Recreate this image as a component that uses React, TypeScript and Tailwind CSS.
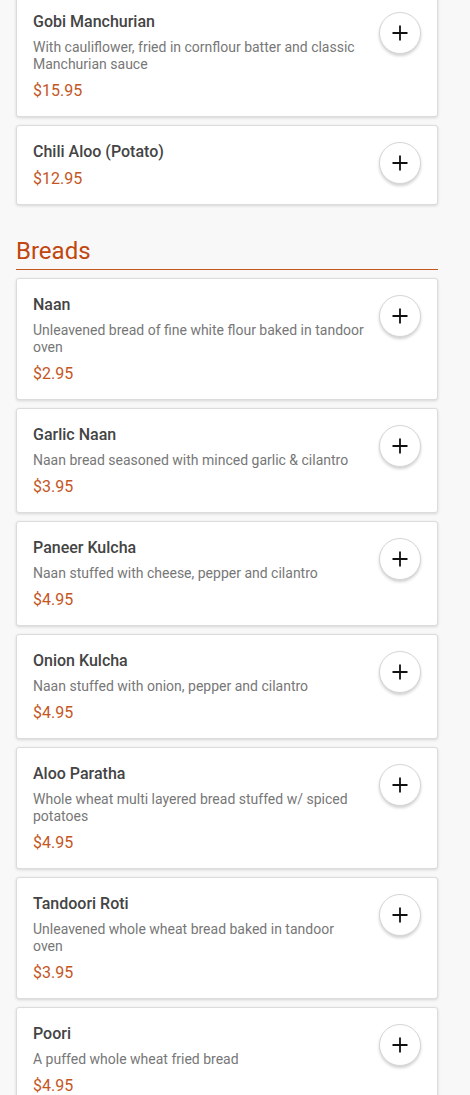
import React, { FC } from "react";

type MenuItem = {
  name: string;
  description?: string;
  price: string;
};

const topItems: MenuItem[] = [
  {
    name: "Gobi Manchurian",
    description: "With cauliflower, fried in cornflour batter and classic Manchurian sauce",
    price: "$15.95",
  },
  { name: "Chili Aloo (Potato)", price: "$12.95" },
];

const breads: MenuItem[] = [
  { name: "Naan", description: "Unleavened bread of fine white flour baked in tandoor oven", price: "$2.95" },
  { name: "Garlic Naan", description: "Naan bread seasoned with minced garlic & cilantro", price: "$3.95" },
  { name: "Paneer Kulcha", description: "Naan stuffed with cheese, pepper and cilantro", price: "$4.95" },
  { name: "Onion Kulcha", description: "Naan stuffed with onion, pepper and cilantro", price: "$4.95" },
  { name: "Aloo Paratha", description: "Whole wheat multi layered bread stuffed w/ spiced potatoes", price: "$4.95" },
  { name: "Tandoori Roti", description: "Unleavened whole wheat bread baked in tandoor oven", price: "$3.95" },
  { name: "Poori", description: "A puffed whole wheat fried bread", price: "$4.95" },
];

const AddButton: FC = () => (
  <button
    type="button"
    className="flex h-[42px] w-[42px] shrink-0 items-center justify-center rounded-full border border-[#d6d6d6] bg-white shadow-[0_2px_3px_rgba(0,0,0,0.18)]"
  >
    <svg width="18" height="18" viewBox="0 0 18 18">
      <path d="M9 1.5v15M1.5 9h15" stroke="#111" strokeWidth="1.8" />
    </svg>
  </button>
);

const MenuCard: FC<{ item: MenuItem }> = ({ item }) => (
  <div className="flex justify-between gap-2 rounded-[3px] border border-[#dcdcdc] bg-white p-4 shadow-[0_1px_3px_rgba(0,0,0,0.14)]">
    <div className="flex flex-col gap-2">
      <div className="text-[16px] leading-[19px] font-medium text-[#444]">{item.name}</div>
      {item.description && (
        <div className="max-w-[332px] text-[14px] leading-[17px] text-[#777]">{item.description}</div>
      )}
      <div className="text-[16px] leading-[19px] text-[#c4561f]">{item.price}</div>
    </div>
    <AddButton />
  </div>
);

export default function App() {
  return (
    <div className="min-h-screen overflow-hidden bg-[#f8f8f8] font-['Roboto','Liberation_Sans',sans-serif]">
      <div className="-mt-[5px] flex w-[454px] flex-col gap-2 px-4">
        {topItems.map((item) => (
          <MenuCard key={item.name} item={item} />
        ))}
        <div className="mt-[24px] flex flex-col gap-[4px]">
          <h2 className="text-[24px] leading-[28px] text-[#c1470f]">Breads</h2>
          <div className="h-px bg-[#c4561f]" />
        </div>
        {breads.map((item) => (
          <MenuCard key={item.name} item={item} />
        ))}
      </div>
    </div>
  );
}
